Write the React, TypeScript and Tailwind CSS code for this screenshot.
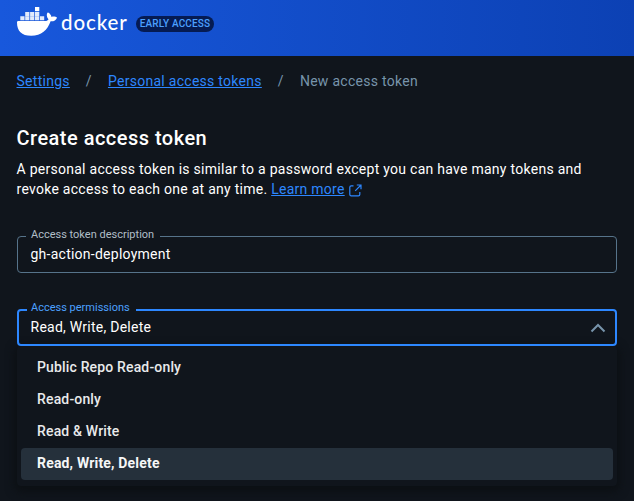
import { ReactNode } from "react";

const options = ["Public Repo Read-only", "Read-only", "Read & Write", "Read, Write, Delete"];
const selected = "Read, Write, Delete";

function DockerLogo() {
  return (
    <div className="flex h-[30px] items-start">
      <svg width="41" height="30" viewBox="0 0 41 30" className="shrink-0" fill="#fff">
        <path d="M0 15.3 Q0 14 1.3 14 H28.2 C29.8 14 31 13.3 31.5 12.2 C29.7 10.2 29.3 7.7 30.4 5.7 L31.1 5.5 C33 6.5 34.1 8.1 34.5 9.9 C36.4 9.4 38.7 9.5 40 10.7 C39.1 13.3 36.8 14.5 33.6 14.3 C30.6 23 24.3 28.8 14.2 28.8 C4.5 28.8 0 24.2 0 15.3 Z" />
        <path d="M18 0h4.3v4.2H18z" />
        <path d="M8.2 5h4.2v4.2H8.2zM13.1 5h4.2v4.2h-4.2zM18 5h4.3v4.2H18z" fillOpacity=".88" />
        <path d="M3.3 9.3h4.2V13.3H3.3zM8.2 9.3h4.2V13.3H8.2zM13.1 9.3h4.2V13.3h-4.2zM18 9.3h4.3V13.3H18zM23 9.3h4.2V13.3H23z" fillOpacity=".88" />
      </svg>
      <span className="ml-[3px] mt-[1px] w-[67px] font-[Lato,sans-serif] text-[20.5px] font-medium leading-[28px] tracking-[0.9px]">
        docker
      </span>
    </div>
  );
}

function Field({ label, active = false, children }: { label: string; active?: boolean; children: ReactNode }) {
  return (
    <fieldset
      className={
        active
          ? "relative z-10 h-[43px] w-[600px] rounded-[4px] border-2 border-[#2d87ff] pl-[8px]"
          : "h-[43px] w-[600px] rounded-[4px] border border-[#56738a] pl-[8px]"
      }
    >
      <legend
        className={
          active
            ? "h-[14px] w-[109px] whitespace-nowrap pl-[4px] text-[11px] leading-[10px] text-[#4ca0ff]"
            : "h-[12px] w-[134px] whitespace-nowrap pl-[5px] text-[11px] leading-[10px] text-[#b0bec8]"
        }
      >
        {label}
      </legend>
      <div
        className={
          active
            ? "flex h-[20px] items-center justify-between pl-[3.5px] pr-[9px] leading-[20px] tracking-[0.25px]"
            : "flex h-[24px] items-center pl-[4.5px] leading-[20px] tracking-[0.25px]"
        }
      >
        {children}
      </div>
    </fieldset>
  );
}

export default function App() {
  return (
    <div className="h-[501px] w-[634px] overflow-hidden bg-[#10151c] font-[Roboto,sans-serif] text-[14px] text-white">
      <header className="flex h-[56px] items-start bg-linear-to-r from-[#1858dc] to-[#0c41b4] pl-[17px] pt-[7px]">
        <DockerLogo />
        <span className="ml-[8px] mt-[9px] flex h-[16px] w-[78px] items-center justify-center rounded-full bg-[#051b52] text-[10px] font-medium leading-none tracking-[0.15px] text-[#4ca0ff]">
          EARLY ACCESS
        </span>
      </header>
      <main className="pl-[16.5px] pt-[15px]">
        <nav className="flex h-[20px] items-center leading-[20px] tracking-[0.28px] text-[#7794ab]">
          <a className="text-[#2d87ff] underline">Settings</a>
          <span className="px-[16px]">/</span>
          <a className="text-[#2d87ff] underline">Personal access tokens</a>
          <span className="px-[16px]">/</span>
          <span>New access token</span>
        </nav>
        <h1 className="mt-[35px] text-[20px] font-medium leading-[24px] tracking-[0.48px]">Create access token</h1>
        <p className="mt-[9px] whitespace-nowrap leading-[20px] tracking-[0.27px]">
          A personal access token is similar to a password except you can have many tokens and
          <br />
          revoke access to each one at any time.{" "}
          <a className="text-[#2d87ff] underline">Learn more</a>
          <svg className="ml-[4px] inline-block align-[-3px]" width="13" height="13" viewBox="0 0 13 13" fill="none" stroke="#2d87ff" strokeWidth="1.2">
            <path d="M4.5 1.8H2.2Q.8 1.8 .8 3.2v7.2Q.8 11.8 2.2 11.8h7.2q1.4 0 1.4-1.4V8M7.8 1H12v4.2M12 1 6.2 6.8" />
          </svg>
        </p>
        <div className="ml-[0.5px] mt-[31px]">
          <Field label="Access token description">gh-action-deployment</Field>
        </div>
        <div className="ml-[0.5px] mt-[30px]">
          <Field label="Access permissions" active>
            <span>Read, Write, Delete</span>
            <svg className="mt-[2px]" width="16" height="10" viewBox="0 0 16 10" fill="none" stroke="#7794ab" strokeWidth="2">
              <path d="m1.5 8.5 6.5-6.5 6.5 6.5" />
            </svg>
          </Field>
        </div>
        <ul className="ml-[0.5px] h-[140px] w-[600px] rounded-[4px] bg-[#10151c] px-[4px] pt-[6px] font-medium shadow-[0_3px_8px_3px_#0c1014]">
          {options.map((option) => (
            <li
              key={option}
              className={
                option === selected
                  ? "flex h-[32px] items-center rounded-[4px] bg-[#25303b] pb-[2px] pl-[16px] font-bold leading-[20px] tracking-[0.18px] text-[#f5f6f7]"
                  : "flex h-[32px] items-center rounded-[4px] pb-[2px] pl-[16px] leading-[20px] tracking-[0.16px] text-[#e9eaeb]"
              }
            >
              {option}
            </li>
          ))}
        </ul>
      </main>
    </div>
  );
}
